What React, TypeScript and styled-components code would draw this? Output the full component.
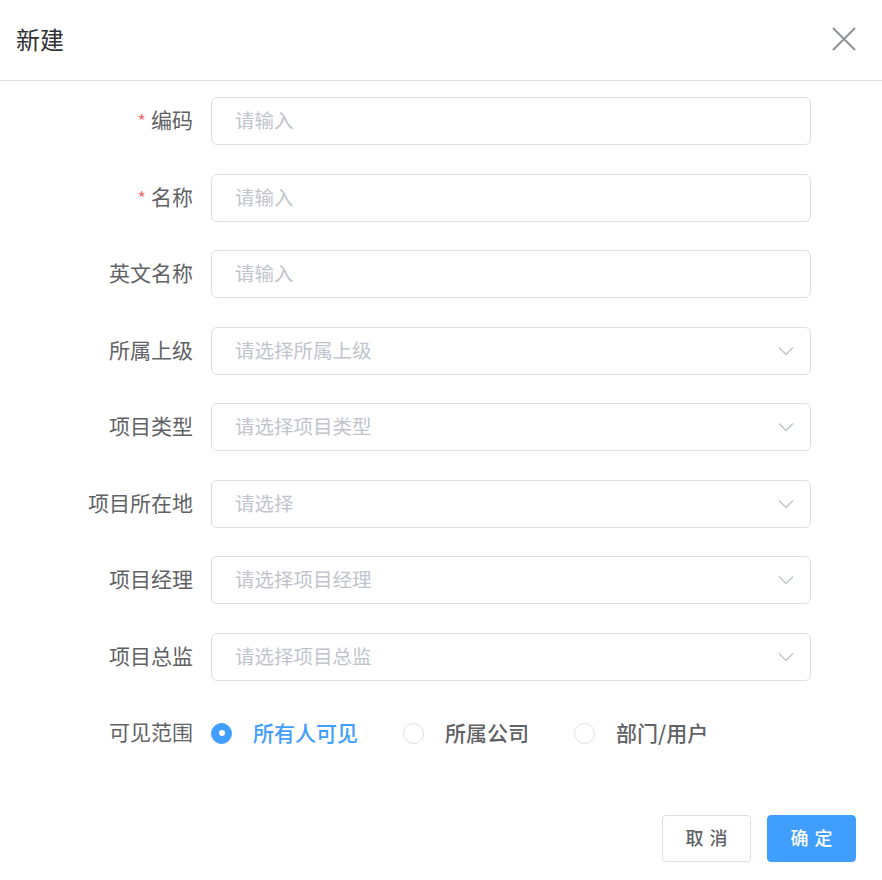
import React, { useState } from 'react';
import styled, { createGlobalStyle } from 'styled-components';

const GlobalStyle = createGlobalStyle`
  html, body {
    margin: 0;
    padding: 0;
    background: #ffffff;
  }
  body {
    font-family: "Noto Sans CJK SC", "Noto Sans", "Liberation Sans", sans-serif;
  }
  * { box-sizing: border-box; }
`;

interface Field {
  label: string;
  placeholder: string;
  required?: boolean;
  select?: boolean;
}

const fields: Field[] = [
  { label: '编码', placeholder: '请输入', required: true },
  { label: '名称', placeholder: '请输入', required: true },
  { label: '英文名称', placeholder: '请输入' },
  { label: '所属上级', placeholder: '请选择所属上级', select: true },
  { label: '项目类型', placeholder: '请选择项目类型', select: true },
  { label: '项目所在地', placeholder: '请选择', select: true },
  { label: '项目经理', placeholder: '请选择项目经理', select: true },
  { label: '项目总监', placeholder: '请选择项目总监', select: true },
];

const scopes = ['所有人可见', '所属公司', '部门/用户'];

const Dialog = styled.div`
  width: 882px;
  height: 880px;
  background: #fff;
`;

const Header = styled.div`
  height: 81px;
  display: flex;
  align-items: center;
  justify-content: space-between;
  padding: 0 26px 2px 16px;
  border-bottom: 1px solid #dcdfe6;
`;

const Title = styled.span`
  font-size: 24px;
  color: #303133;
  line-height: 1;
`;

const CloseButton = styled.button`
  border: none;
  background: none;
  padding: 0;
  width: 24px;
  height: 24px;
  cursor: pointer;
  display: flex;
`;

const Body = styled.div`
  padding: 16px 0 0 0;
`;

const FormItem = styled.div`
  display: flex;
  align-items: center;
  height: 48px;
  margin-bottom: 28.5px;
`;

const Label = styled.label`
  width: 211px;
  padding-right: 18px;
  padding-bottom: 4px;
  text-align: right;
  font-size: 21px;
  color: #606266;
  flex-shrink: 0;
`;

const Star = styled.span`
  color: #f56c6c;
  margin-right: 5px;
  font-size: 18px;
`;

const InputBox = styled.div`
  position: relative;
  width: 600px;
  height: 48px;
`;

const Input = styled.input`
  width: 100%;
  height: 100%;
  border: 1px solid #dcdfe6;
  border-radius: 6px;
  padding: 0 48px 3px 23px;
  font-size: 19.5px;
  font-family: inherit;
  color: #606266;
  outline: none;
  &::placeholder {
    color: #c0c4cc;
  }
`;

const Arrow = styled.span`
  position: absolute;
  right: 17px;
  top: 50%;
  transform: translateY(-50%);
  display: flex;
`;

const RadioGroup = styled.div`
  display: flex;
  align-items: center;
`;

const RadioItem = styled.label`
  display: flex;
  align-items: center;
  margin-right: 45px;
  cursor: pointer;
`;

const RadioCircle = styled.span<{ $checked: boolean }>`
  width: 21px;
  height: 21px;
  border-radius: 50%;
  border: 1px solid ${(p) => (p.$checked ? '#409eff' : '#dcdfe6')};
  background: ${(p) => (p.$checked ? '#409eff' : '#fff')};
  display: flex;
  align-items: center;
  justify-content: center;
  &::after {
    content: '';
    width: 6px;
    height: 6px;
    border-radius: 50%;
    background: #fff;
    display: ${(p) => (p.$checked ? 'block' : 'none')};
  }
`;

const RadioText = styled.span<{ $checked: boolean }>`
  margin-left: 21px;
  padding-bottom: 3px;
  font-size: 21px;
  font-weight: 500;
  color: ${(p) => (p.$checked ? '#409eff' : '#606266')};
`;

const Footer = styled.div`
  display: flex;
  justify-content: flex-end;
  gap: 16px;
  padding: 29px 26px 0 0;
`;

const Button = styled.button<{ $primary?: boolean }>`
  width: 89px;
  height: 47px;
  border-radius: 4px;
  border: 1px solid ${(p) => (p.$primary ? '#409eff' : '#dcdfe6')};
  background: ${(p) => (p.$primary ? '#409eff' : '#fff')};
  color: ${(p) => (p.$primary ? '#fff' : '#606266')};
  font-family: inherit;
  font-size: 18px;
  font-weight: 500;
  letter-spacing: 1px;
  padding: 0 0 2px 1px;
  cursor: pointer;
`;

const App: React.FC = () => {
  const [scope, setScope] = useState(0);

  return (
    <>
      <GlobalStyle />
      <Dialog>
        <Header>
          <Title>新建</Title>
          <CloseButton aria-label="close">
            <svg width="24" height="24" viewBox="0 0 24 24">
              <path d="M1 1L23 23M23 1L1 23" stroke="#909399" strokeWidth="2" />
            </svg>
          </CloseButton>
        </Header>
        <Body>
          {fields.map((f) => (
            <FormItem key={f.label}>
              <Label>
                {f.required && <Star>*</Star>}
                {f.label}
              </Label>
              <InputBox>
                <Input placeholder={f.placeholder} readOnly={f.select} />
                {f.select && (
                  <Arrow>
                    <svg width="16" height="10" viewBox="0 0 16 10">
                      <path d="M1 1.5L8 8.5L15 1.5" fill="none" stroke="#c0c4cc" strokeWidth="1.4" />
                    </svg>
                  </Arrow>
                )}
              </InputBox>
            </FormItem>
          ))}
          <FormItem>
            <Label>可见范围</Label>
            <RadioGroup>
              {scopes.map((s, i) => (
                <RadioItem key={s} onClick={() => setScope(i)}>
                  <RadioCircle $checked={scope === i} />
                  <RadioText $checked={scope === i}>{s}</RadioText>
                </RadioItem>
              ))}
            </RadioGroup>
          </FormItem>
        </Body>
        <Footer>
          <Button>取 消</Button>
          <Button $primary>确 定</Button>
        </Footer>
      </Dialog>
    </>
  );
};

export default App;
